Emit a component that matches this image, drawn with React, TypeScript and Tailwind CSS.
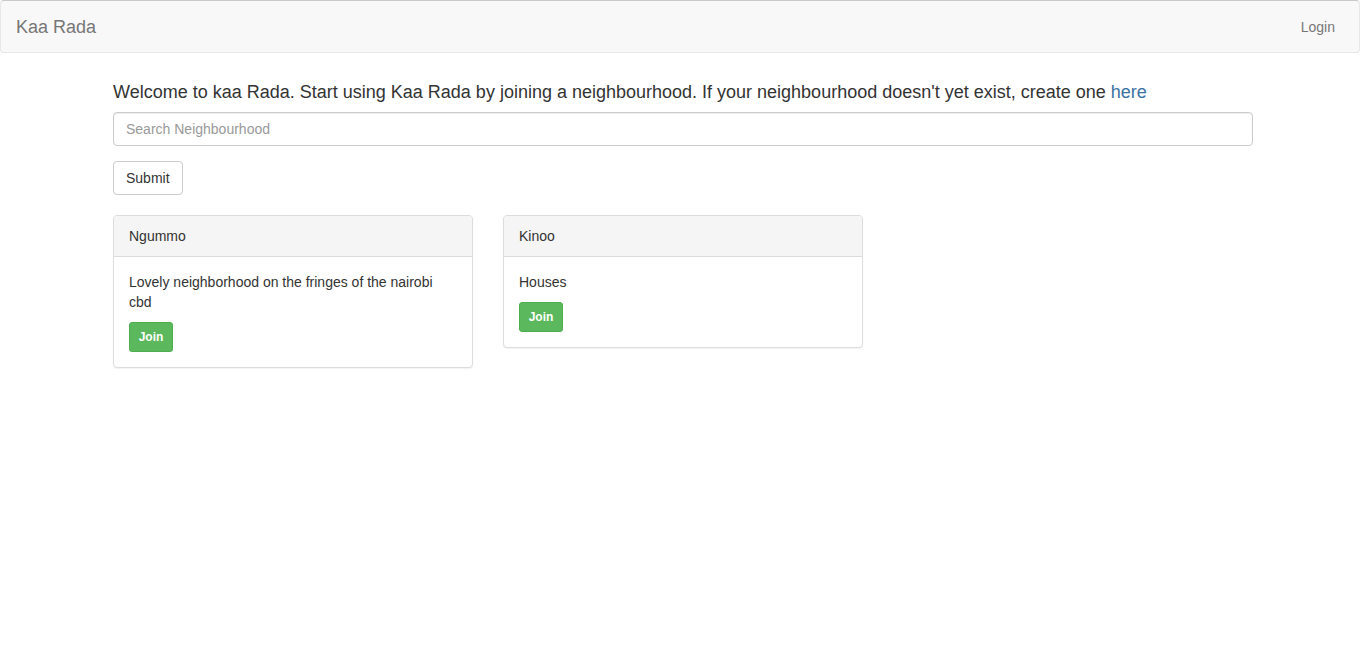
import React from "react";

const font = { fontFamily: '"Liberation Sans", Arial, Helvetica, sans-serif' };

function Card({ title, body }: { title: string; body: string }) {
  return (
    <div className="w-[360px] border border-[#ddd] rounded-[4px] bg-white shadow-[0_1px_1px_rgba(0,0,0,0.05)]">
      <div className="bg-[#f5f5f5] border-b border-[#ddd] rounded-t-[3px] px-[15px] py-[10px] text-[14px] leading-[20px] text-[#333]">
        {title}
      </div>
      <div className="p-[15px]">
        <p className="text-[14px] leading-[20px] text-[#333] mb-[10px]">{body}</p>
        <button className="h-[30px] w-[44px] bg-[#5cb85c] border border-[#4cae4c] rounded-[3px] text-white text-[12px] font-bold leading-[18px]">
          Join
        </button>
      </div>
    </div>
  );
}

export default function App() {
  return (
    <div className="min-h-[660px] bg-white text-[#333]" style={font}>
      <nav className="h-[53px] bg-[#f8f8f8] border border-[#e7e7e7] border-t-[#c9c9c9] rounded-[4px] flex items-center justify-between pl-[15px] pr-[9px]">
        <span className="text-[18px] leading-[20px] text-[#777]">Kaa Rada</span>
        <span className="text-[14px] leading-[20px] text-[#777] px-[15px]">Login</span>
      </nav>
      <div className="ml-[113px] w-[1140px] pt-[29px]">
        <h4 className="text-[18px] leading-[20px] font-normal mb-[10px]">
          Welcome to kaa Rada. Start using Kaa Rada by joining a neighbourhood. If your neighbourhood doesn't yet exist, create one{" "}
          <a className="text-[#3b72a3]">here</a>
        </h4>
        <input
          placeholder="Search Neighbourhood"
          className="block w-full h-[34px] px-[12px] py-[6px] border border-[#ccc] rounded-[4px] text-[14px] text-[#555] placeholder:text-[#999] shadow-[inset_0_1px_1px_rgba(0,0,0,0.075)] outline-none"
        />
        <button className="mt-[15px] h-[34px] px-[12px] border border-[#ccc] rounded-[4px] bg-white text-[14px] leading-[20px] text-[#333]">
          Submit
        </button>
        <div className="mt-[20px] flex items-start gap-[30px]">
          <Card title="Ngummo" body="Lovely neighborhood on the fringes of the nairobi cbd" />
          <Card title="Kinoo" body="Houses" />
        </div>
      </div>
    </div>
  );
}
